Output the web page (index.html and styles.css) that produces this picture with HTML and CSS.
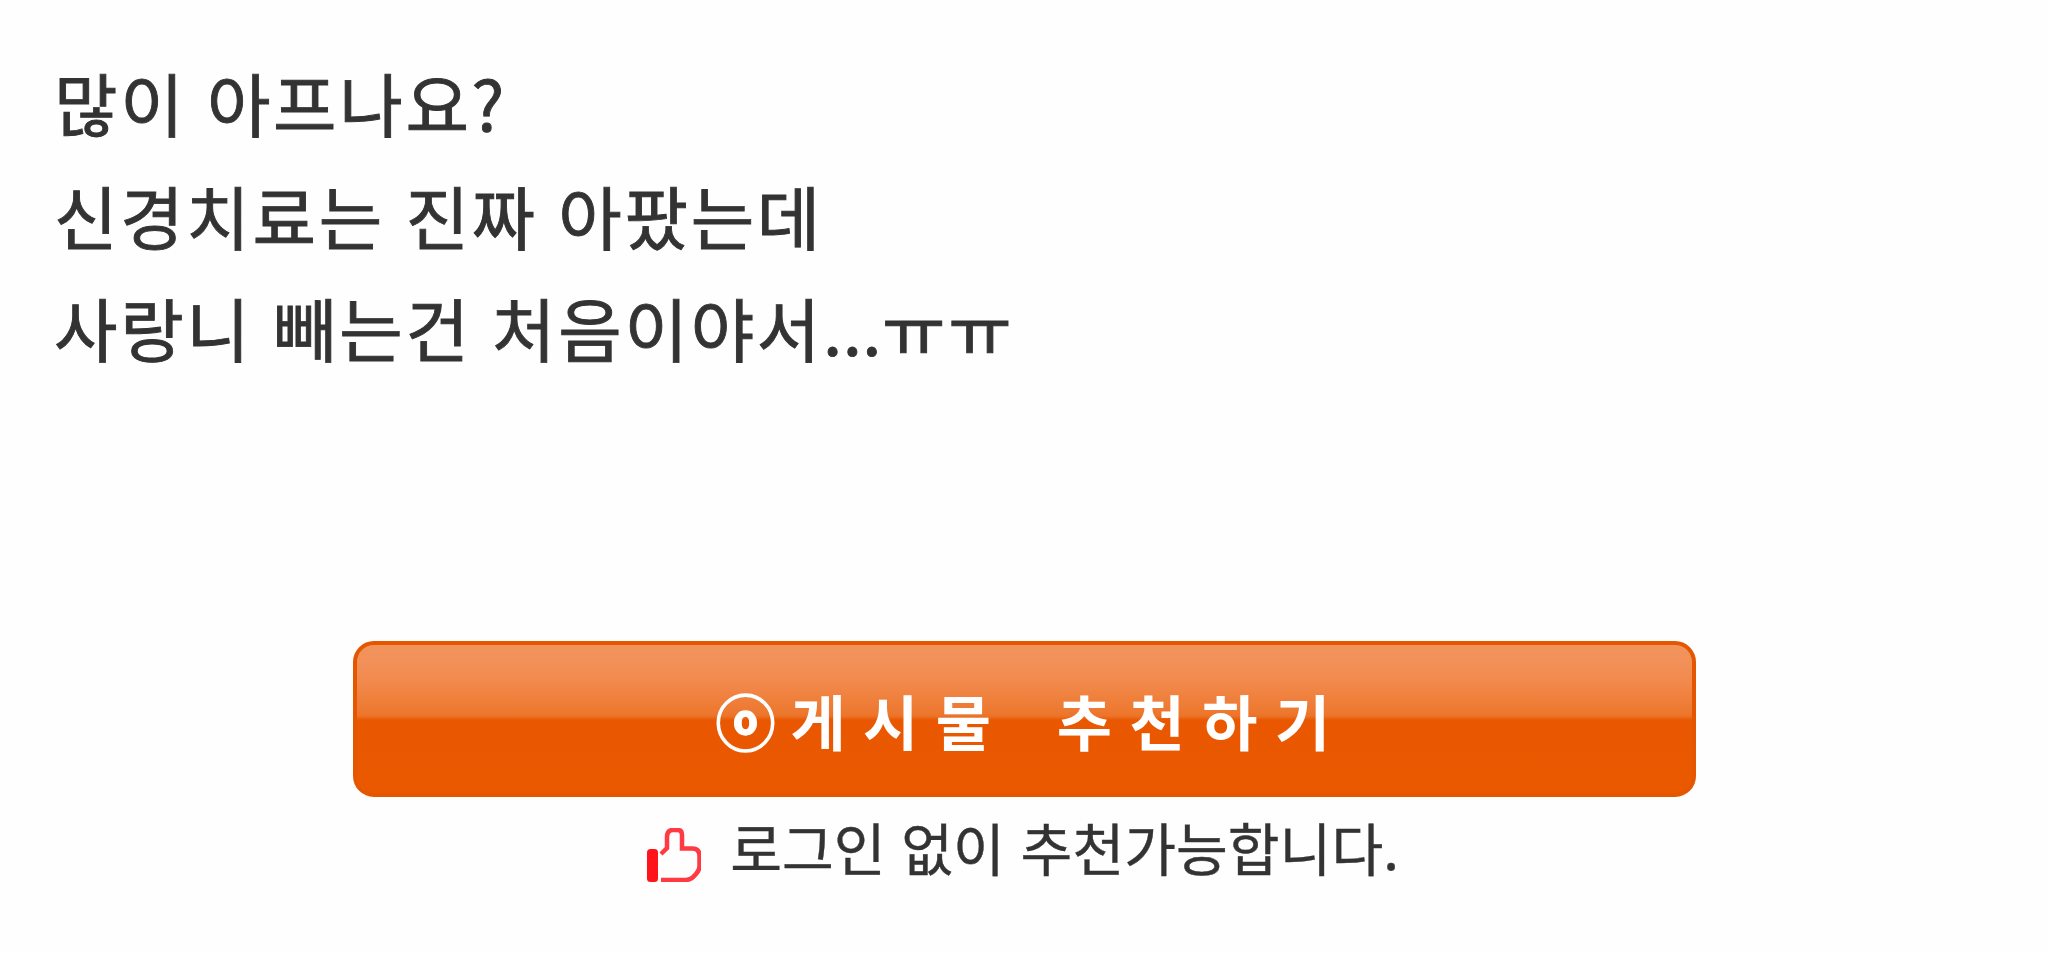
FILE: index.html
```
<!DOCTYPE html>
<html lang="ko">
  <head>
    <meta charset="utf-8">
    <title>게시물</title>
    <link rel="stylesheet" href="styles.css">
  </head>
  <body>
    <div class="post-content">
      <p>많이 아프나요?</p>
      <p>신경치료는 진짜 아팠는데</p>
      <p>사랑니 빼는건 처음이야서<span class="dots">...</span>ㅠㅠ</p>
    </div>
    <div class="recommend">
      <button type="button" class="recommend-btn"><span class="mark">ⓞ</span>게시물 추천하기</button>
      <div class="recommend-info">
        <svg class="thumb" viewBox="0 0 54 54">
          <rect x="0" y="21" width="11" height="33" rx="3.5" fill="#ff141c"/>
          <path d="M14 26 L20 20 V9 Q20 2 26 2 H31 Q35 2 35 7 V20.500 H45 Q52.500 20.500 52.500 28 V38 Q52.500 42 49 46 Q44 52 39 52 H14" fill="none" stroke="#ff3a42" stroke-width="4.500"/>
        </svg>
        <span>로그인 없이 추천가능합니다.</span>
      </div>
    </div>
  </body>
</html>
```
FILE: styles.css
```
* {
  margin: 0;
  padding: 0;
  box-sizing: border-box;
}
body {
  background-color: #fefefe;
  font-family: "Noto Sans CJK KR", sans-serif;
  color: #333;
  overflow: hidden;
}
.post-content {
  padding: 46px 0 0 54px;
  height: 641px;
}
.post-content p {
  font-size: 69px;
  line-height: 112.500px;
  letter-spacing: 2.700px;
  word-spacing: -1.500px;
  white-space: nowrap;
  -webkit-text-stroke: 0.900px #333;
}
.post-content .dots {
  letter-spacing: 0.400px;
}
.recommend {
  display: flex;
  flex-direction: column;
  align-items: center;
  padding-left: 1px;
}
.recommend-btn {
  width: 1343px;
  height: 156px;
  padding-left: 14px;
  border: 4px solid #e55600;
  border-radius: 21px;
  background: linear-gradient(#f2945c 0, #f2915a 20px, #f28a4d 40px, #ed7930 70px, #ec742a 75px, #e95800 79px, #ea5900 100%);
  background-origin: border-box;
  font-family: "Noto Sans CJK KR", sans-serif;
  font-size: 60px;
  font-weight: bold;
  letter-spacing: 17.500px;
  word-spacing: 14px;
  color: white;
  cursor: pointer;
}
.mark {
  letter-spacing: 15px;
  -webkit-text-stroke: 1.300px white;
}
.recommend-info {
  display: flex;
  align-items: flex-start;
  margin-left: -3px;
  font-size: 56.300px;
  line-height: 84px;
}
.recommend-info span {
  margin-top: 8px;
  -webkit-text-stroke: 0.400px #333;
}
.thumb {
  width: 54px;
  height: 54px;
  margin-top: 31px;
  margin-right: 29px;
}
```
